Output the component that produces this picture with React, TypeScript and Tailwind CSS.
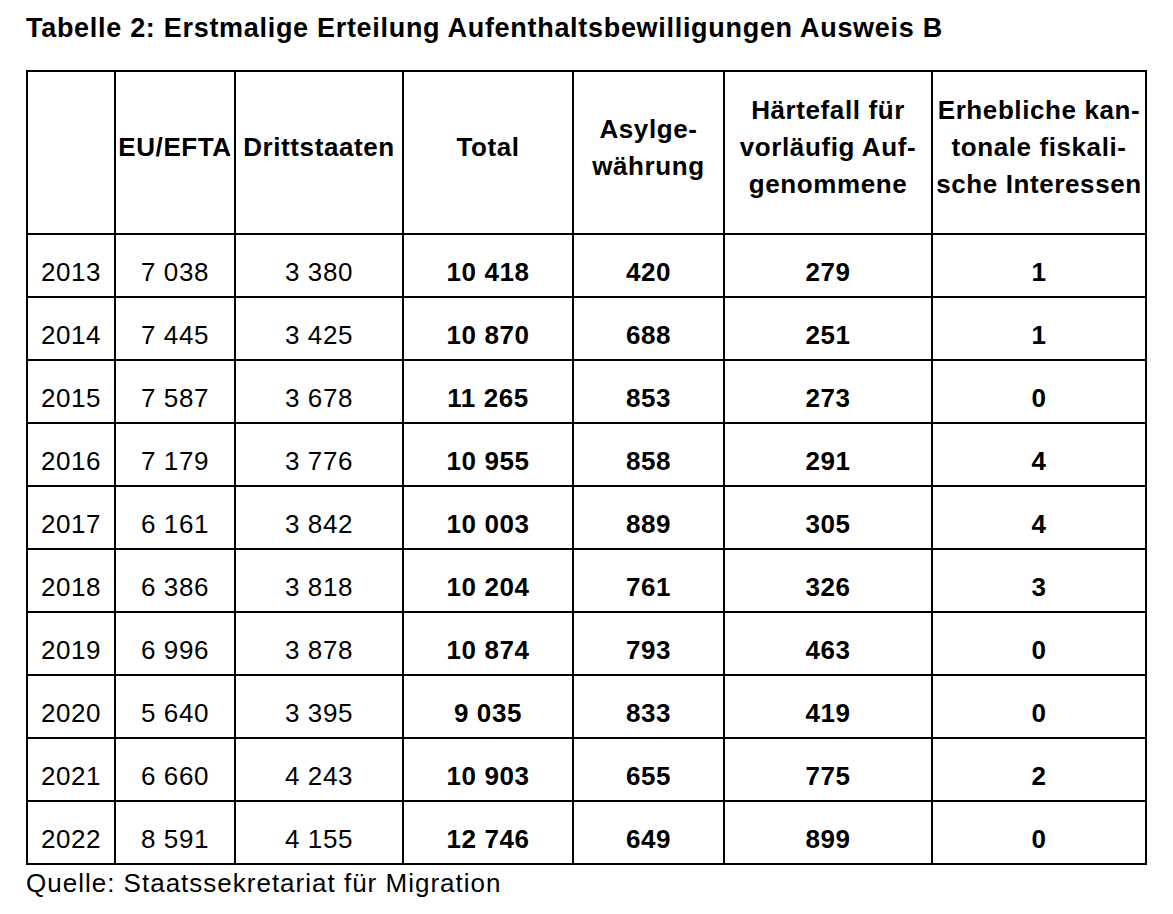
const rows = [
  ['2013', '7 038', '3 380', '10 418', '420', '279', '1'],
  ['2014', '7 445', '3 425', '10 870', '688', '251', '1'],
  ['2015', '7 587', '3 678', '11 265', '853', '273', '0'],
  ['2016', '7 179', '3 776', '10 955', '858', '291', '4'],
  ['2017', '6 161', '3 842', '10 003', '889', '305', '4'],
  ['2018', '6 386', '3 818', '10 204', '761', '326', '3'],
  ['2019', '6 996', '3 878', '10 874', '793', '463', '0'],
  ['2020', '5 640', '3 395', '9 035', '833', '419', '0'],
  ['2021', '6 660', '4 243', '10 903', '655', '775', '2'],
  ['2022', '8 591', '4 155', '12 746', '649', '899', '0'],
]

const widths = ['w-[88px]', 'w-[120px]', 'w-[168px]', 'w-[170px]', 'w-[151px]', 'w-[208px]', 'w-[214px]']

const headers = [
  [''],
  ['EU/EFTA'],
  ['Drittstaaten'],
  ['Total'],
  ['Asylge-', 'währung'],
  ['Härtefall für', 'vorläufig Auf-', 'genommene'],
  ['Erhebliche kan-', 'tonale fiskali-', 'sche Interessen'],
]

export default function App() {
  return (
    <div className="min-h-screen bg-white pl-[26px] pt-[10px] text-black [font-family:'Liberation_Sans',Arial,sans-serif]">
      <h1 className="text-[27px] font-bold leading-[36px] tracking-[0.7px]">
        Tabelle 2: Erstmalige Erteilung Aufenthaltsbewilligungen Ausweis B
      </h1>
      <table className="mt-[24px] table-fixed border-collapse border-2 border-black text-[26px] leading-[37px] tracking-[0.6px]">
        <colgroup>
          {widths.map((w, i) => (
            <col key={i} className={w} />
          ))}
        </colgroup>
        <thead>
          <tr className="h-[163px]">
            {headers.map((lines, i) => (
              <th
                key={i}
                className="border-2 border-black p-0 pb-[10px] text-center align-middle font-bold whitespace-nowrap"
              >
                {lines.map((l, j) => (
                  <div key={j}>{l}</div>
                ))}
              </th>
            ))}
          </tr>
        </thead>
        <tbody>
          {rows.map((r) => (
            <tr key={r[0]} className="h-[63px]">
              {r.map((v, i) => (
                <td
                  key={i}
                  className={`border-2 border-black p-0 pt-[14px] text-center align-middle ${i >= 3 ? 'font-bold' : ''}`}
                >
                  {v}
                </td>
              ))}
            </tr>
          ))}
        </tbody>
      </table>
      <p className="pt-[3px] text-[26px] leading-[30px] tracking-[1px]">Quelle: Staatssekretariat für Migration</p>
    </div>
  )
}
